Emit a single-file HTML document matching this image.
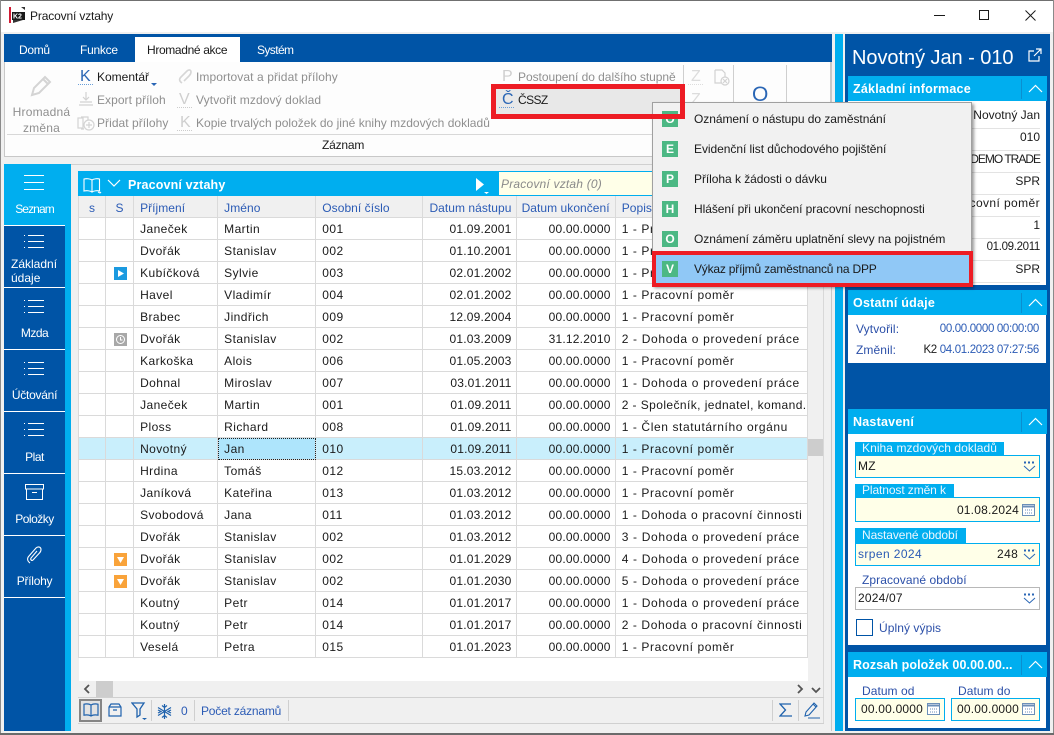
<!DOCTYPE html>
<html lang="cs"><head><meta charset="utf-8"><title>Pracovní vztahy</title>
<style>
html,body{margin:0;padding:0;width:1054px;height:735px;overflow:hidden;background:#f0f0f0}
body{position:relative;font-family:"Liberation Sans",sans-serif;font-size:12px;letter-spacing:.05px;color:#1a1a1a}
.a,.t,svg{position:absolute}
.t{white-space:nowrap;line-height:16px}
.r{text-align:right}
.g{color:#8f8f8f}
.w{color:#fff}
.b{font-weight:bold}
.lb{color:#2b4fa8}
.nav{position:absolute;left:4px;width:61px;height:61px;background:#0054a6;border-bottom:1px solid #fff;color:#fff;text-align:center;box-sizing:content-box;letter-spacing:-.5px}
.nav span{position:absolute;left:0;width:61px;line-height:15px;top:38px}
.nav svg{left:20px;top:12px}
table{position:absolute;left:78px;top:196px;border-collapse:separate;border-spacing:0;table-layout:fixed;width:730px;letter-spacing:.42px}
td,th{height:19px;padding:2px 0 0 6px;box-sizing:content-box;border-right:1px solid #dadada;border-bottom:1px solid #dadada;white-space:nowrap;overflow:hidden;font-weight:normal;text-align:left;line-height:19px}
td:first-child,th:first-child{border-left:1px solid #dadada}
th{background:#f0f0f0;color:#2b5bb5;letter-spacing:.05px;height:18px;padding-top:3px;line-height:18px}
td{background:#fff}
td.n{text-align:right;padding:2px 4px 0 0;letter-spacing:.2px}
td:last-child{letter-spacing:.6px}
th.c{text-align:center;padding:3px 0 0}
tr.sel td{background:#c9effc}
tr.sel td.cur{background:#aee5fc;outline:1px dotted #222;outline-offset:-1px}
.hd{position:absolute;left:848px;width:199px;height:25px;background:#00aeef}
.hd b{position:absolute;left:5px;top:5px;color:#fff;line-height:17px;font-size:12.5px;letter-spacing:.22px;white-space:nowrap}
.hd i{position:absolute;left:173px;top:3px;height:20px;width:1px;background:#0a8fd0}
.hd svg{left:180px;top:8px}
.wh{position:absolute;left:848px;width:198px;background:#fff}
.lab{position:absolute;background:#00aeef;height:13px;line-height:13px;padding-left:7px;white-space:nowrap;color:#eaf6ff;letter-spacing:0}
.fld{position:absolute;box-sizing:border-box;border:1px solid #00aeef;background:#ffffe8;line-height:20px;padding-left:2px;white-space:nowrap;letter-spacing:.2px}
.rw{position:absolute;left:848px;width:192px;text-align:right;line-height:16px;border-bottom:1px solid #e3e3e3;height:21px;white-space:nowrap;letter-spacing:0}
.mi{position:absolute;left:694px;line-height:16px;white-space:nowrap;letter-spacing:-.05px}
.ic{position:absolute;left:662px;width:16px;height:16px;background:#4cb884;color:#fff;text-align:center;font-weight:bold;font-size:12px;line-height:16px;letter-spacing:0}
.sep{position:absolute;width:1px;background:#cfcfcf}
.lt{position:absolute;white-space:nowrap;line-height:16px;font-size:16px;letter-spacing:0}
.dt{font-size:11.5px;letter-spacing:-.33px}
</style></head><body>
<!-- window frame -->
<div class="a" style="left:0;top:0;width:1054px;height:32px;background:#fff"></div>
<div class="a" style="left:0;top:0;width:1054px;height:1px;background:#707070"></div>
<div class="a" style="left:0;top:0;width:1px;height:735px;background:#8a8a8a"></div>
<div class="a" style="left:1053px;top:0;width:1px;height:735px;background:#8a8a8a"></div>
<div class="a" style="left:0;top:733px;width:1054px;height:2px;background:#6b6b6b"></div>
<svg style="left:9px;top:7px" width="17" height="17"><rect width="17" height="17" fill="#fff"/><rect x="0" y="0" width="2" height="16" fill="#d01c34"/><rect x="3" y="5" width="13" height="8" fill="#1a1a1a"/><path d="M12 0l4 3v-3zM4 16l10-3h-10z" fill="#333"/><text x="4" y="11.5" font-family="Liberation Sans" font-size="7" font-weight="bold" fill="#fff" letter-spacing="0">K2</text></svg>
<div class="t" style="left:30px;top:8px;letter-spacing:-.15px">Pracovní vztahy</div>
<svg style="left:930px;top:8px" width="110" height="14" fill="none" stroke="#1a1a1a" stroke-width="1"><path d="M4 7.5h11"/><rect x="49.5" y="2.5" width="9" height="9"/><path d="M95.5 2.5l10 10M105.5 2.5l-10 10"/></svg>

<!-- ribbon -->
<div class="a" style="left:4px;top:34px;width:828px;height:28px;background:#0054a6"></div>
<div class="a" style="left:135px;top:37px;width:105px;height:25px;background:#fff"></div>
<div class="t w" style="left:19px;top:42px;letter-spacing:-.3px">Domů</div>
<div class="t w" style="left:80px;top:42px;letter-spacing:-.25px">Funkce</div>
<div class="t" style="left:147px;top:42px;letter-spacing:-.35px">Hromadné akce</div>
<div class="t w" style="left:257px;top:42px;letter-spacing:-.6px">Systém</div>
<div class="a" style="left:4px;top:62px;width:827px;height:95px;background:#fdfdfd;border:1px solid #c8c8c8;border-top:0;box-sizing:border-box"></div>
<div class="a" style="left:7px;top:134px;width:822px;height:1px;background:#d8d8d8"></div>
<div class="t" style="left:322px;top:137px;letter-spacing:-.2px">Záznam</div>
<svg style="left:29px;top:74px" width="24" height="24" fill="none" stroke="#d4d4d4" stroke-width="2"><path d="M3 21l2-7L16 3l5 5-11 11z"/><path d="M14 5l5 5"/></svg>
<div class="t g r" style="left:4px;width:75px;top:104px;text-align:center;letter-spacing:.2px;line-height:16px;white-space:normal">Hromadná změna</div>

<div class="lt" style="left:80px;top:69px;color:#2a66b5">K</div>
<div class="a" style="left:78px;top:84px;width:15px;border-top:1px dotted #6a9fd8"></div>
<div class="t" style="left:97px;top:69px;letter-spacing:0">Komentář</div>
<svg style="left:151px;top:83px" width="7" height="4"><path d="M0 0h6L3 3z" fill="#2a66b5"/></svg>
<svg style="left:79px;top:92px" width="14" height="15" fill="none" stroke="#d2d2d2" stroke-width="1.2"><path d="M7 0v7M4 5l3 3 3-3M1 10h12M0 13h14"/></svg>
<div class="t g" style="left:97px;top:92px">Export příloh</div>
<svg style="left:77px;top:115px" width="18" height="16" fill="none" stroke="#d4d4d4" stroke-width="1.2"><rect x="1" y="3" width="5" height="10"/><path d="M4 2h7v3M4 14h3"/><circle cx="12" cy="10" r="5"/><path d="M12 7v6M9 10h6"/></svg>
<div class="t g" style="left:97px;top:115px">Přidat přílohy</div>

<svg style="left:177px;top:68px" width="16" height="18" fill="none" stroke="#d6d6d6" stroke-width="1.6"><path d="M5 15c-3-2-3-4-1-6l6-6c2-2 4-1 4 1s-1 3-2 4l-5 5"/></svg>
<div class="t g" style="left:196px;top:69px;letter-spacing:.09px">Importovat a přidat přílohy</div>
<div class="lt" style="left:179px;top:92px;color:#cfcfcf">V</div>
<div class="a" style="left:177px;top:107px;width:15px;border-top:1px dotted #ccc"></div>
<div class="t g" style="left:196px;top:92px;letter-spacing:.1px">Vytvořit mzdový doklad</div>
<div class="lt" style="left:180px;top:115px;color:#cfcfcf">K</div>
<div class="a" style="left:177px;top:130px;width:15px;border-top:1px dotted #ccc"></div>
<div class="t g" style="left:196px;top:115px;letter-spacing:.02px">Kopie trvalých položek do jiné knihy mzdových dokladů</div>

<div class="lt" style="left:502px;top:69px;color:#cfcfcf">P</div>
<div class="a" style="left:499px;top:84px;width:15px;border-top:1px dotted #ddd"></div>
<div class="t g" style="left:518px;top:69px;letter-spacing:-.04px">Postoupení do dalšího stupně</div>

<div class="a" style="left:491px;top:84px;width:194px;height:35px;box-sizing:border-box;border:5px solid #ed1c24;background:#e8e8e8"></div>
<div class="lt" style="left:502px;top:92px;color:#2a66b5">Č</div>
<div class="a" style="left:499px;top:107px;width:15px;border-top:1px dotted #6a9fd8"></div>
<div class="t" style="left:518px;top:92px;letter-spacing:-.6px">ČSSZ</div>

<div class="sep" style="left:683px;top:65px;height:66px"></div>
<div class="lt" style="left:691px;top:69px;color:#dcdcdc">Z</div>
<div class="a" style="left:688px;top:84px;width:15px;border-top:1px dotted #ddd"></div>
<div class="lt" style="left:691px;top:92px;color:#dcdcdc">Z</div>
<svg style="left:713px;top:69px" width="17" height="17" fill="none" stroke="#d2d2d2" stroke-width="1.2"><path d="M2 1h7l3 3v4M2 1v13h6"/><circle cx="12" cy="12" r="4"/><path d="M10 10l4 4M14 10l-4 4"/></svg>
<div class="sep" style="left:733px;top:65px;height:66px"></div>
<div class="t" style="left:752px;top:84px;color:#2a66b5;font-size:21px;letter-spacing:0;line-height:22px">O</div>
<div class="sep" style="left:786px;top:65px;height:66px"></div>

<!-- left nav -->
<div class="a" style="left:71px;top:164px;width:761px;height:1px;background:#d0d0d0"></div>
<div class="a" style="left:4px;top:164px;width:67px;height:567px;background:#00aeef"></div>
<div class="a" style="left:4px;top:598px;width:61px;height:133px;background:#0054a6"></div>

<div class="nav" style="top:164px;background:#00aeef"><svg width="21" height="18" fill="none" stroke="#fff" style="top:11px"><path d="M0 .5h20M0 7.500h20M0 14.500h20"/></svg><span style="top:38px;letter-spacing:-.9px">Seznam</span></div>
<div class="nav" style="top:226px"><svg width="21" height="18" fill="none" stroke="#fff" style="top:9px"><path d="M4 .5h16M4 6.500h16M4 12.500h16M0 .5h1M0 6.500h1M0 12.500h1"/></svg><span style="top:31px;left:7px;width:54px;text-align:left;line-height:14px;letter-spacing:0">Základní<br>údaje</span></div>
<div class="nav" style="top:288px"><svg width="21" height="18" fill="none" stroke="#fff"><path d="M4 .5h16M4 6.500h16M4 12.500h16M0 .5h1M0 6.500h1M0 12.500h1"/></svg><span>Mzda</span></div>
<div class="nav" style="top:350px"><svg width="21" height="18" fill="none" stroke="#fff"><path d="M4 .5h16M4 6.500h16M4 12.500h16M0 .5h1M0 6.500h1M0 12.500h1"/></svg><span style="letter-spacing:-.25px">Účtování</span></div>
<div class="nav" style="top:412px"><svg width="21" height="18" fill="none" stroke="#fff" style="top:11px"><path d="M4 .5h16M4 6.500h16M4 12.500h16M0 .5h1M0 6.500h1M0 12.500h1"/></svg><span>Plat</span></div>
<div class="nav" style="top:474px"><svg width="21" height="18" fill="none" stroke="#fff" style="top:10px"><rect x="1.500" y=".5" width="18" height="4.500"/><path d="M2.500 5v10.500h16V5M8 8.500h5"/></svg><span>Položky</span></div>
<div class="nav" style="top:536px"><svg width="21" height="20" fill="none" stroke="#fff" stroke-width="1.100" style="top:9px"><path d="M6 18c-3-2-3-5-1-7l7-8c2-2 5-1 5 1.500s-1 3-2 4l-6 6.500c-1 1-3 0-2-2l6-7"/></svg><span style="letter-spacing:-.25px">Přílohy</span></div>

<!-- grid header -->
<div class="a" style="left:78px;top:171px;width:746px;height:25px;background:#00aeef"></div>
<svg style="left:83px;top:177px" width="20" height="17" fill="none" stroke="#fff" stroke-width="1.1"><path d="M9 3C7 1.500 3 1.500 1 2v12c2-.5 6-.5 8 1 2-1.500 6-1.500 7.500-1V2C15 1.500 11 1.500 9 3zM9 3v12"/><path d="M15 15l2 1 1-1" /></svg>
<svg style="left:107px;top:179px" width="15" height="9" fill="none" stroke="#fff" stroke-width="1.2"><path d="M1 1l6 6 6-6"/></svg>
<div class="t w b" style="left:128px;top:177px;letter-spacing:.15px;font-size:12.500px">Pracovní vztahy</div>
<svg style="left:475px;top:178px" width="16" height="17"><path d="M1 0l8 6.500L1 13z" fill="#fff"/><path d="M9 14h5l-2.500 2z" fill="#fff"/></svg>
<div class="a" style="left:499px;top:172px;width:153px;height:23px;background:#ffffe8"></div>
<div class="t" style="left:501px;top:176px;color:#8a8a8a;font-style:italic;letter-spacing:.2px">Pracovní vztah (0)</div>

<!-- grid -->
<div class="a" style="left:79px;top:196px;width:745px;height:502px;background:#fff"></div>
<table><colgroup><col style="width:28px"><col style="width:28px"><col style="width:84px"><col style="width:98px"><col style="width:107px"><col style="width:93px"><col style="width:99px"><col style="width:192px"></colgroup>
<tr><th class="c">s</th><th class="c">S</th><th>Příjmení</th><th>Jméno</th><th>Osobní číslo</th><th style="padding-left:6px">Datum nástupu</th><th style="padding-left:5px">Datum ukončení</th><th>Popis</th></tr>
<tr><td></td><td></td><td>Janeček</td><td>Martin</td><td>001</td><td class="n">01.09.2001</td><td class="n">00.00.0000</td><td>1 - Pracovní poměr</td></tr>
<tr><td></td><td></td><td>Dvořák</td><td>Stanislav</td><td>002</td><td class="n">01.10.2001</td><td class="n">00.00.0000</td><td>1 - Pracovní poměr</td></tr>
<tr><td></td><td></td><td>Kubíčková</td><td>Sylvie</td><td>003</td><td class="n">02.01.2002</td><td class="n">00.00.0000</td><td>1 - Pracovní poměr</td></tr>
<tr><td></td><td></td><td>Havel</td><td>Vladimír</td><td>004</td><td class="n">02.01.2002</td><td class="n">00.00.0000</td><td>1 - Pracovní poměr</td></tr>
<tr><td></td><td></td><td>Brabec</td><td>Jindřich</td><td>009</td><td class="n">12.09.2004</td><td class="n">00.00.0000</td><td>1 - Pracovní poměr</td></tr>
<tr><td></td><td></td><td>Dvořák</td><td>Stanislav</td><td>002</td><td class="n">01.03.2009</td><td class="n">31.12.2010</td><td style="letter-spacing:.67px">2 - Dohoda o provedení práce</td></tr>
<tr><td></td><td></td><td>Karkoška</td><td>Alois</td><td>006</td><td class="n">01.05.2003</td><td class="n">00.00.0000</td><td>1 - Pracovní poměr</td></tr>
<tr><td></td><td></td><td>Dohnal</td><td>Miroslav</td><td>007</td><td class="n">03.01.2011</td><td class="n">00.00.0000</td><td style="letter-spacing:.67px">1 - Dohoda o provedení práce</td></tr>
<tr><td></td><td></td><td>Janeček</td><td>Martin</td><td>001</td><td class="n">01.09.2011</td><td class="n">00.00.0000</td><td style="letter-spacing:.42px">2 - Společník, jednatel, komand.</td></tr>
<tr><td></td><td></td><td>Ploss</td><td>Richard</td><td>008</td><td class="n">01.09.2011</td><td class="n">00.00.0000</td><td>1 - Člen statutárního orgánu</td></tr>
<tr class="sel"><td></td><td></td><td>Novotný</td><td class="cur">Jan</td><td>010</td><td class="n">01.09.2011</td><td class="n">00.00.0000</td><td>1 - Pracovní poměr</td></tr>
<tr><td></td><td></td><td>Hrdina</td><td>Tomáš</td><td>012</td><td class="n">15.03.2012</td><td class="n">00.00.0000</td><td>1 - Pracovní poměr</td></tr>
<tr><td></td><td></td><td>Janíková</td><td>Kateřina</td><td>013</td><td class="n">01.03.2012</td><td class="n">00.00.0000</td><td>1 - Pracovní poměr</td></tr>
<tr><td></td><td></td><td>Svobodová</td><td>Jana</td><td>011</td><td class="n">01.03.2012</td><td class="n">00.00.0000</td><td>1 - Dohoda o pracovní činnosti</td></tr>
<tr><td></td><td></td><td>Dvořák</td><td>Stanislav</td><td>002</td><td class="n">01.03.2012</td><td class="n">00.00.0000</td><td style="letter-spacing:.67px">3 - Dohoda o provedení práce</td></tr>
<tr><td></td><td></td><td>Dvořák</td><td>Stanislav</td><td>002</td><td class="n">01.01.2029</td><td class="n">00.00.0000</td><td style="letter-spacing:.67px">4 - Dohoda o provedení práce</td></tr>
<tr><td></td><td></td><td>Dvořák</td><td>Stanislav</td><td>002</td><td class="n">01.01.2030</td><td class="n">00.00.0000</td><td style="letter-spacing:.67px">5 - Dohoda o provedení práce</td></tr>
<tr><td></td><td></td><td>Koutný</td><td>Petr</td><td>014</td><td class="n">01.01.2017</td><td class="n">00.00.0000</td><td style="letter-spacing:.67px">1 - Dohoda o provedení práce</td></tr>
<tr><td></td><td></td><td>Koutný</td><td>Petr</td><td>014</td><td class="n">01.01.2017</td><td class="n">00.00.0000</td><td>2 - Dohoda o pracovní činnosti</td></tr>
<tr><td></td><td></td><td>Veselá</td><td>Petra</td><td>015</td><td class="n">01.01.2023</td><td class="n">00.00.0000</td><td>1 - Pracovní poměr</td></tr>
</table>
<!-- status icons -->
<svg style="left:114px;top:267px" width="13" height="13"><rect width="13" height="13" fill="#1b9ae0"/><path d="M4 3l6 3.500-6 3.500z" fill="#fff"/></svg>
<svg style="left:114px;top:333px" width="13" height="13" fill="none"><rect width="13" height="13" fill="#a8a8a8"/><circle cx="6.500" cy="6.500" r="4" stroke="#fff"/><path d="M6.500 4v3h2" stroke="#fff"/></svg>
<svg style="left:114px;top:553px" width="13" height="13"><rect width="13" height="13" fill="#f9a33a"/><path d="M3 4h7l-3.500 6z" fill="#fff"/></svg>
<svg style="left:114px;top:575px" width="13" height="13"><rect width="13" height="13" fill="#f9a33a"/><path d="M3 4h7l-3.500 6z" fill="#fff"/></svg>

<!-- scrollbars -->
<div class="a" style="left:808px;top:196px;width:15px;height:501px;background:#f0f0f0"></div>
<div class="a" style="left:808px;top:439px;width:15px;height:17px;background:#cdcdcd"></div>
<div class="a" style="left:79px;top:681px;width:729px;height:16px;background:#f0f0f0"></div>
<div class="a" style="left:96px;top:681px;width:17px;height:16px;background:#cdcdcd"></div>
<svg style="left:83px;top:684px" width="8" height="10" fill="none" stroke="#555" stroke-width="1.800"><path d="M6 1L2 5l4 4"/></svg>
<svg style="left:796px;top:684px" width="8" height="10" fill="none" stroke="#555" stroke-width="1.800"><path d="M2 1l4 4-4 4"/></svg>
<svg style="left:811px;top:686px" width="10" height="8" fill="none" stroke="#555" stroke-width="1.800"><path d="M1 2l4 4 4-4"/></svg>
<div class="a" style="left:823px;top:196px;width:1px;height:527px;background:#d8d8d8"></div>
<div class="a" style="left:78px;top:697px;width:746px;height:1px;background:#d0d0d0"></div>
<div class="a" style="left:78px;top:723px;width:746px;height:1px;background:#d0d0d0"></div>
<div class="a" style="left:831px;top:62px;width:1px;height:669px;background:#c8c8c8"></div>

<!-- bottom toolbar -->
<div class="a" style="left:79px;top:699px;width:23px;height:23px;box-sizing:border-box;border:2px solid #858585;background:#e3e3e3"></div>
<svg style="left:83px;top:703px" width="16" height="14" fill="none" stroke="#1f62ad" stroke-width="1.200"><path d="M8 2C6 .8 3 .8 1 1.200v11c2-.4 5-.4 7 .8 2-1.200 5-1.200 7-.8v-11C13 .8 10 .8 8 2zM8 2v11"/></svg>
<svg style="left:108px;top:703px" width="14" height="14" fill="none" stroke="#1f62ad" stroke-width="1.200"><path d="M1 4l2-3h8l2 3v9H1zM1 4h12M5 7h4"/></svg>
<svg style="left:131px;top:701px" width="18" height="20" fill="none" stroke="#1f62ad" stroke-width="1.300"><path d="M1 2h12L9 8v6l-3 2V8z"/><path d="M11 17h5l-2.500 2z" fill="#1f62ad" stroke="none"/></svg>
<div class="sep" style="left:151px;top:700px;height:21px"></div>
<svg style="left:157px;top:704px" width="15" height="15" fill="none" stroke="#1f62ad" stroke-width="1.200"><path d="M7.500 0v15M1 3.500l13 8M14 3.500l-13 8M5 1.500l2.500 2 2.500-2M5 13.500l2.500-2 2.500 2M1 6l3 1.500L1 9M14 6l-3 1.500L14 9"/></svg>
<div class="t" style="left:181px;top:703px;color:#2b5bb5">0</div>
<div class="sep" style="left:194px;top:700px;height:21px"></div>
<div class="t" style="left:201px;top:703px;color:#2b5bb5;letter-spacing:-.2px">Počet záznamů</div>
<div class="sep" style="left:288px;top:700px;height:21px"></div>
<div class="sep" style="left:772px;top:700px;height:21px"></div>
<svg style="left:779px;top:703px" width="13" height="14" fill="none" stroke="#1f62ad" stroke-width="1.300"><path d="M12 1H1l5.500 6L1 13h12"/></svg>
<div class="sep" style="left:798px;top:700px;height:21px"></div>
<svg style="left:804px;top:701px" width="16" height="18" fill="none" stroke="#1f62ad" stroke-width="1.100"><path d="M1 15l1-4 8-9 3 3-8 9zM9 3l3 3M4 17h12"/></svg>

<!-- right panel -->
<div class="a" style="left:835px;top:34px;width:8px;height:697px;background:#00aeef"></div>
<div class="a" style="left:845px;top:34px;width:205px;height:697px;background:#0054a6"></div>
<div class="t w" style="left:852px;top:47px;font-size:20px;line-height:22px;letter-spacing:-.05px">Novotný Jan - 010</div>
<svg style="left:1028px;top:48px" width="14" height="14" fill="none" stroke="#fff" stroke-width="1.200"><path d="M6 3H1v10h10V8M8 1h5v5M13 1L6 8"/></svg>

<div class="hd" style="top:76px"><b>Základní informace</b><i></i><svg width="15" height="9" fill="none" stroke="#fff" stroke-width="1.200"><path d="M1 8l6.500-6.500L14 8"/></svg></div>
<div class="wh" style="top:101px;height:184px"></div>
<div class="rw" style="top:107px">Novotný Jan</div>
<div class="rw" style="top:129px">010</div>
<div class="rw" style="top:151px;letter-spacing:-1px">DEMO TRADE</div>
<div class="rw" style="top:173px">SPR</div>
<div class="rw" style="top:195px;letter-spacing:.4px">Pracovní poměr</div>
<div class="rw" style="top:217px">1</div>
<div class="rw dt" style="top:239px">01.09.2011</div>
<div class="rw" style="top:261px">SPR</div>

<div class="hd" style="top:290px"><b>Ostatní údaje</b><i></i><svg width="15" height="9" fill="none" stroke="#fff" stroke-width="1.200"><path d="M1 8l6.500-6.500L14 8"/></svg></div>
<div class="wh" style="top:315px;height:48px"></div>
<div class="t lb" style="left:856px;top:321px;letter-spacing:.1px">Vytvořil:</div>
<div class="t lb" style="left:856px;top:342px;letter-spacing:.1px">Změnil:</div>
<div class="t r dt" style="left:880px;width:159px;top:321px;color:#2b5bb5">00.00.0000 00:00:00</div>
<div class="t r dt" style="left:880px;width:159px;top:342px;color:#2b5bb5"><span style="color:#1a1a1a">K2</span> 04.01.2023 07:27:56</div>

<div class="hd" style="top:409px"><b>Nastavení</b><i></i><svg width="15" height="9" fill="none" stroke="#fff" stroke-width="1.200"><path d="M1 8l6.500-6.500L14 8"/></svg></div>
<div class="wh" style="top:434px;height:211px"></div>
<div class="lab" style="left:855px;top:442px;width:142px;letter-spacing:.07px">Kniha mzdových dokladů</div>
<div class="fld" style="left:855px;top:455px;width:185px;height:23px">MZ</div>
<svg style="left:1023px;top:461px" width="13" height="11" fill="none" stroke="#2a66b5"><path d="M1 1.500h2M5 1.500h2M9 1.500h2" stroke-width="2"/><path d="M1 5l5.500 5L12 5"/></svg>
<div class="lab" style="left:855px;top:484px;width:92px;letter-spacing:-.1px">Platnost změn k</div>
<div class="fld r" style="left:855px;top:497px;width:185px;height:25px;padding-right:20px;line-height:24px">01.08.2024</div>
<svg style="left:1022px;top:503px" width="14" height="14" fill="none" stroke="#6b8fb8"><rect x=".5" y="1.500" width="12" height="11" fill="#fff"/><path d="M.5 3.500h12" stroke-width="2"/><path d="M3 7h7M3 10h7" stroke-dasharray="1 1"/></svg>
<div class="lab" style="left:855px;top:528px;width:104px;height:15px;line-height:15px;letter-spacing:-.1px">Nastavené období</div>
<div class="fld" style="left:855px;top:543px;width:185px;height:23px;color:#2b5bb5;letter-spacing:.4px">srpen 2024<span class="a" style="left:141px;top:0;color:#1a1a1a">248</span></div>
<svg style="left:1023px;top:549px" width="13" height="11" fill="none" stroke="#2a66b5"><path d="M1 1.500h2M5 1.500h2M9 1.500h2" stroke-width="2"/><path d="M1 5l5.500 5L12 5"/></svg>
<div class="t lb" style="left:862px;top:572px;letter-spacing:.07px">Zpracované období</div>
<div class="fld" style="left:855px;top:587px;width:185px;height:23px;border-color:#b8b8b8;background:#fff">2024/07</div>
<svg style="left:1023px;top:593px" width="13" height="11" fill="none" stroke="#2a66b5"><path d="M1 1.500h2M5 1.500h2M9 1.500h2" stroke-width="2"/><path d="M1 5l5.500 5L12 5"/></svg>
<div class="a" style="left:856px;top:619px;width:17px;height:17px;box-sizing:border-box;border:1px solid #0054a6;background:#fff"></div>
<div class="t lb" style="left:879px;top:620px;letter-spacing:.07px">Úplný výpis</div>

<div class="hd" style="top:652px"><b style="letter-spacing:.1px">Rozsah položek 00.00.00...</b><i></i><svg width="15" height="9" fill="none" stroke="#fff" stroke-width="1.200"><path d="M1 8l6.500-6.500L14 8"/></svg></div>
<div class="wh" style="top:677px;height:51px"></div>
<div class="t lb" style="left:862px;top:683px">Datum od</div>
<div class="t lb" style="left:958px;top:683px">Datum do</div>
<div class="fld" style="left:855px;top:698px;width:90px;height:23px;padding-left:5px">00.00.0000</div>
<div class="fld" style="left:951px;top:698px;width:89px;height:23px;padding-left:5px">00.00.0000</div>
<svg style="left:927px;top:702px" width="14" height="14" fill="none" stroke="#6b8fb8"><rect x=".5" y="1.500" width="12" height="11" fill="#fff"/><path d="M.5 3.500h12" stroke-width="2"/><path d="M3 7h7M3 10h7" stroke-dasharray="1 1"/></svg>
<svg style="left:1022px;top:702px" width="14" height="14" fill="none" stroke="#6b8fb8"><rect x=".5" y="1.500" width="12" height="11" fill="#fff"/><path d="M.5 3.500h12" stroke-width="2"/><path d="M3 7h7M3 10h7" stroke-dasharray="1 1"/></svg>

<!-- popup menu -->
<div class="a" style="left:652px;top:102px;width:320px;height:184px;box-sizing:border-box;background:#f1f1f1;border:1px solid #a0a0a0;box-shadow:2px 2px 3px rgba(0,0,0,.4)"></div>
<div class="ic" style="top:111px">O</div><div class="mi" style="top:111px">Oznámení o nástupu do zaměstnání</div>
<div class="ic" style="top:141px">E</div><div class="mi" style="top:141px">Evidenční list důchodového pojištění</div>
<div class="ic" style="top:171px">P</div><div class="mi" style="top:171px">Příloha k žádosti o dávku</div>
<div class="ic" style="top:201px">H</div><div class="mi" style="top:201px">Hlášení při ukončení pracovní neschopnosti</div>
<div class="ic" style="top:231px">O</div><div class="mi" style="top:231px">Oznámení záměru uplatnění slevy na pojistném</div>
<div class="a" style="left:652px;top:251px;width:321px;height:36px;box-sizing:border-box;border:4px solid #ed1c24;background:#90c8f6"></div>
<div class="ic" style="top:261px">V</div><div class="mi" style="top:261px;letter-spacing:-.2px">Výkaz příjmů zaměstnanců na DPP</div>
<!-- red box of ČSSZ overlays popup corner -->
<div class="a" style="left:680px;top:84px;width:5px;height:35px;background:#ed1c24"></div>
<div class="a" style="left:652px;top:114px;width:33px;height:5px;background:#ed1c24"></div>
</body></html>
